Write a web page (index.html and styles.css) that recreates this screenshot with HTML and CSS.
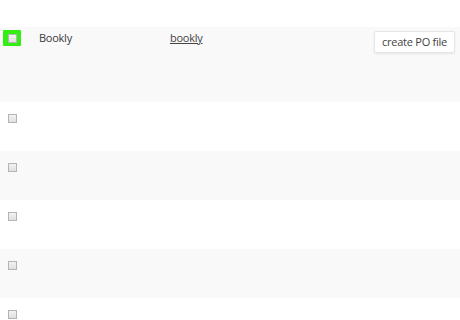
FILE: index.html
```html
<!DOCTYPE html>
<html lang="en">

<head>
    <meta charset="UTF-8">
    <title>Plugins</title>
    <meta name="viewport" content="width=device-width, initial-scale=1.0">
    <link rel="stylesheet" href="styles.css">
</head>

<body>
    <div class="lista">
        <div class="fila fila-gris fila-primera">
            <div class="celda-check"><span class="marca"><input type="checkbox"></span></div>
            <div class="celda-nombre">Bookly</div>
            <div class="celda-slug"><a href="#">bookly</a></div>
            <div class="celda-accion"><button class="boton">create PO file</button></div>
        </div>
        <div class="fila"><div class="celda-check"><input type="checkbox"></div></div>
        <div class="fila fila-gris"><div class="celda-check"><input type="checkbox"></div></div>
        <div class="fila"><div class="celda-check"><input type="checkbox"></div></div>
        <div class="fila fila-gris"><div class="celda-check"><input type="checkbox"></div></div>
        <div class="fila"><div class="celda-check"><input type="checkbox"></div></div>
    </div>
</body>
</html>
```

FILE: styles.css
```css
/* Reset basico */
body, html {
margin: 0;
padding: 0;
background: #fff;
font-family: "Open Sans", sans-serif;
font-size: 11px;
letter-spacing: -0.25px;
color: #3a3a3a;
}

.lista {
padding-top: 27px;
}

/* Cada fila de la tabla */
.fila {
display: flex;
align-items: flex-start;
height: 49px;
}

.fila-gris {
background: #f9f9f9;
}

.fila-primera {
height: 75px;
}

.celda-check {
width: 30px;
padding: 12px 0 0 8px;
box-sizing: border-box;
}

.fila-primera .celda-check {
padding: 3px 0 0 3px;
}

/* Resaltado verde del primer checkbox */
.marca {
display: flex;
align-items: center;
justify-content: center;
width: 18px;
height: 16px;
background: #33ee11;
border-radius: 1px;
}

input[type=checkbox] {
appearance: none;
margin: 0;
width: 9px;
height: 9px;
border: 1px solid #b4b4b4;
background: linear-gradient(#f2f2f2, #e0e0e0);
box-sizing: border-box;
display: block;
}

.celda-nombre {
width: 131px;
padding: 3px 0 0 9px;
}

.celda-slug {
flex: 1;
padding-top: 3px;
}

.celda-slug a {
color: #444;
}

.celda-accion {
padding: 4px 5px 0 0;
}

/* Boton de accion */
.boton {
font-family: inherit;
font-size: 11px;
letter-spacing: -0.25px;
line-height: 14px;
color: #444;
background: #fff;
border: 1px solid #e6e6e6;
border-radius: 2px;
box-shadow: 0 1px 2px rgba(0, 0, 0, 0.08);
padding: 3px 7px;
cursor: pointer;
}
```
